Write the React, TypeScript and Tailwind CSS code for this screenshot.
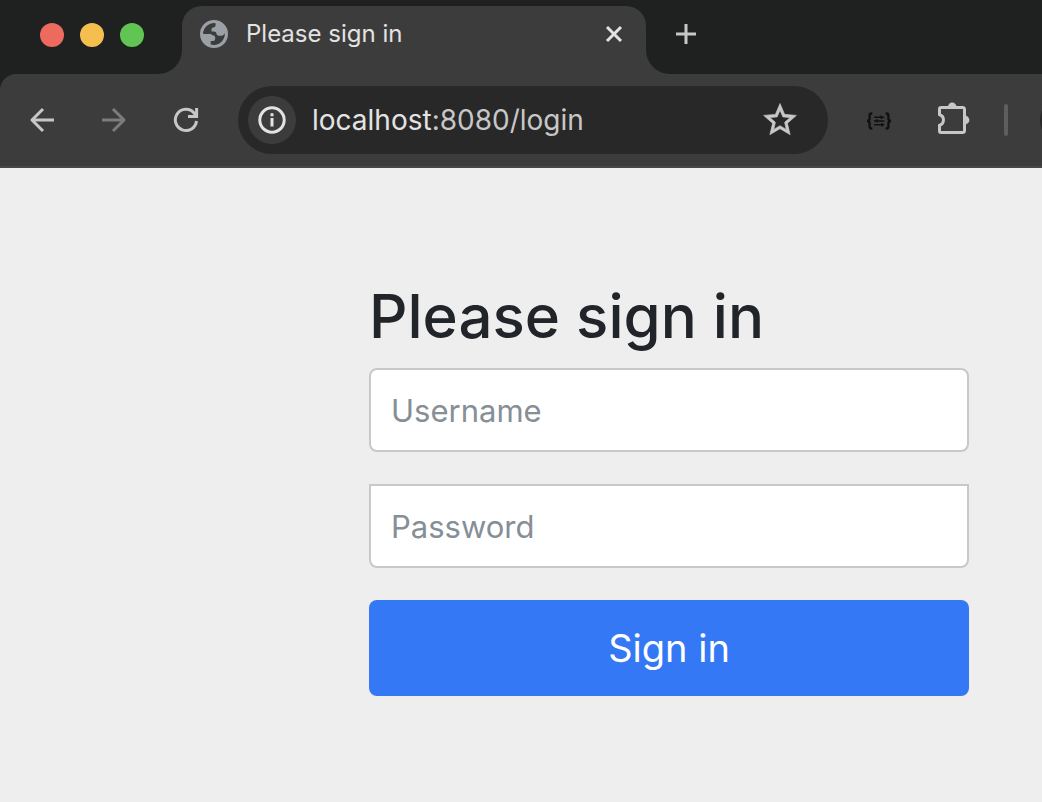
import type { ButtonHTMLAttributes, ReactNode } from "react";

type IconButtonProps = ButtonHTMLAttributes<HTMLButtonElement> & {
  label: string;
  children: ReactNode;
};

function IconButton({ label, children, className = "", ...rest }: IconButtonProps) {
  return (
    <button
      type="button"
      aria-label={label}
      className={`flex shrink-0 items-center justify-center ${className}`}
      {...rest}
    >
      {children}
    </button>
  );
}

function BackIcon() {
  return (
    <svg width="32" height="32" viewBox="0 0 32 32" fill="none" stroke="currentColor" strokeWidth="3" aria-hidden="true">
      <path d="M28 16H6" />
      <path d="M17 5 6 16l11 11" strokeLinejoin="round" />
    </svg>
  );
}

function ForwardIcon() {
  return (
    <svg width="32" height="32" viewBox="0 0 32 32" fill="none" stroke="currentColor" strokeWidth="3" aria-hidden="true">
      <path d="M4 16h22" />
      <path d="m15 5 11 11-11 11" strokeLinejoin="round" />
    </svg>
  );
}

function ReloadIcon() {
  return (
    <svg width="32" height="32" viewBox="0 0 32 32" fill="none" stroke="currentColor" strokeWidth="3" aria-hidden="true">
      <path d="M26.500 17A10.600 10.600 0 1 1 24 9l2 2.400" />
      <path d="M18 12.500h8.600V4" />
    </svg>
  );
}

function GlobeIcon() {
  return (
    <svg width="28" height="28" viewBox="0 0 28 28" fill="currentColor" fillRule="evenodd" aria-hidden="true">
      <path d="M14 0a14 14 0 1 0 0 28a14 14 0 0 0 0-28z M3.100 13.900A10.900 10.900 0 0 1 15.600 3.200V5.300Q15.600 7.300 13.500 7.400Q11.500 7.500 11.500 9.300V11.600H14.200Q16.600 11.700 16.600 14Q16.800 15.700 18.700 15.700H22Q23.500 15.500 24.800 13.200A10.900 10.900 0 0 1 10.700 24.400V21.100H13Q15.200 21 15.200 18.800V17.500Q15 15.400 12.800 15.300Q11.500 15.100 11.300 13.900z" />
    </svg>
  );
}

function InfoIcon() {
  return (
    <svg width="28" height="28" viewBox="0 0 28 28" fill="none" stroke="currentColor" strokeWidth="3" aria-hidden="true">
      <circle cx="14" cy="14" r="12.200" />
      <path d="M14 12v8.500" />
      <path d="M14 7.300v2.900" />
    </svg>
  );
}

function StarIcon() {
  return (
    <svg width="40" height="40" viewBox="0 0 24 24" fill="currentColor" aria-hidden="true">
      <path
        d="m21.800 9.240-7.050-.62L12 2.100 9.250 8.630 2.200 9.240l5.360 4.730L5.920 20.800 12 17.200 18.080 20.800l-1.630-6.830L21.800 9.240zM12 15.400l-3.760 2.270 1-4.280-3.320-2.880 4.380-.38L12 6.100l1.710 4.040 4.380.38-3.320 2.880 1 4.280L12 15.400z"
        stroke="currentColor"
        strokeWidth=".4"
      />
    </svg>
  );
}

function BracesIcon() {
  return (
    <svg width="26" height="20" viewBox="0 0 26 20" fill="none" stroke="currentColor" aria-hidden="true">
      <g strokeWidth="2.300">
        <path d="M6.300 3.500H5.600C4.200 3.500 3.600 4.200 3.600 5.500v3C3.600 10 2.800 11 1 11c1.800 0 2.600 1 2.600 2.500v3c0 1.300.6 2 2 2h.7" />
        <path d="M19.700 3.500h.7c1.400 0 2 .7 2 2v3c0 1.500.8 2.500 2.600 2.500-1.800 0-2.600 1-2.600 2.500v3c0 1.300-.6 2-2 2h-.7" />
      </g>
      <g strokeWidth="1.500">
        <path d="M8 7.300h10.300M8 10.900h10.300M8 14.700h10.300" />
        <path d="M15.300 5.600V9M10.800 9.300v3.300M16 13v3.400" />
      </g>
    </svg>
  );
}

function PuzzleIcon() {
  return (
    <svg width="32" height="36" viewBox="0 0 32 36" fill="none" stroke="currentColor" strokeWidth="3" strokeLinejoin="round" aria-hidden="true">
      <path d="M3 5.500H25A1.500 1.500 0 0 1 26.500 7V29A1.500 1.500 0 0 1 25 30.500H3A1.500 1.500 0 0 1 1.500 29V23.200A5.400 5.400 0 0 0 1.500 12.800V7A1.500 1.500 0 0 1 3 5.500z" />
      <path d="M9.800 5a4.400 4.400 0 0 1 8.800 0zM27 13.600a4.400 4.400 0 0 1 0 8.800z" fill="currentColor" stroke="none" />
    </svg>
  );
}

function TabStrip() {
  return (
    <div className="flex h-[74px] bg-[#3c3c3c]">
      <div className="flex w-[182px] shrink-0 items-start gap-4 rounded-br-3xl bg-[#1f2120] pt-[23px] pl-10">
        <button type="button" aria-label="Close window" className="size-6 rounded-full bg-[#ed6a5e]" />
        <button type="button" aria-label="Minimize window" className="size-6 rounded-full bg-[#f5bf4f]" />
        <button type="button" aria-label="Zoom window" className="size-6 rounded-full bg-[#61c554]" />
      </div>
      <div className="flex w-[464px] bg-[#1f2120] pt-1.5">
        <div className="flex min-w-0 flex-1 items-start rounded-t-[20px] bg-[#3c3c3c] pr-4 pl-[18px] text-[#e3e3e3]">
          <div className="flex h-14 min-w-0 flex-1 items-center gap-[18px]">
            <span className="shrink-0 text-[#9aa0a6]">
              <GlobeIcon />
            </span>
            <span className="flex-1 truncate text-2xl">Please sign in</span>
            <IconButton label="Close tab" className="size-8">
              <svg width="18" height="18" viewBox="0 0 18 18" stroke="currentColor" strokeWidth="3" aria-hidden="true">
                <path d="m2 2 14 14M16 2 2 16" />
              </svg>
            </IconButton>
          </div>
        </div>
      </div>
      <div className="flex flex-1 items-start rounded-bl-3xl bg-[#1f2120] pt-[14px] pl-5">
        <IconButton label="New tab" className="size-10 text-[#c7c7c7]">
          <svg width="20" height="20" viewBox="0 0 20 20" stroke="currentColor" strokeWidth="3" aria-hidden="true">
            <path d="M10 0v20M0 10h20" />
          </svg>
        </IconButton>
      </div>
    </div>
  );
}

function Toolbar() {
  return (
    <div className="bg-[#1f2120]">
      <div className="flex h-[94px] items-center overflow-hidden rounded-tl-2xl border-b-2 border-[#474747] bg-[#3c3c3c] pl-[26px] text-[#c7c7c7]">
        <div className="flex shrink-0 gap-10">
          <IconButton label="Back" className="size-8">
            <BackIcon />
          </IconButton>
          <IconButton label="Forward" className="size-8 text-[#7c7c7c]" disabled>
            <ForwardIcon />
          </IconButton>
          <IconButton label="Reload" className="size-8">
            <ReloadIcon />
          </IconButton>
        </div>
        <div className="ml-9 flex h-[68px] min-w-0 flex-1 items-center rounded-full bg-[#282828] pr-7 pl-2.5">
          <IconButton label="View site information" className="size-12 rounded-full bg-[#3c3c3c] text-[#e3e3e3]">
            <InfoIcon />
          </IconButton>
          <p className="ml-4 flex-1 truncate text-[28px] leading-9 text-[#c7c7c7]">
            <span className="text-[#e3e3e3]">localhost</span>:8080/login
          </p>
          <IconButton label="Bookmark this tab" className="size-10">
            <StarIcon />
          </IconButton>
        </div>
        <div className="ml-[38px] flex shrink-0 items-center">
          <IconButton label="JSON viewer" className="text-[#101010]">
            <BracesIcon />
          </IconButton>
          <IconButton label="Extensions" className="ml-[46px]">
            <PuzzleIcon />
          </IconButton>
          <div className="ml-[34px] h-8 w-1 rounded-full bg-[#5e5e5e]" />
          <div className="ml-8 w-0.5 shrink-0 overflow-hidden">
            <div className="size-12 rounded-full bg-[#282828]" />
          </div>
        </div>
      </div>
    </div>
  );
}

function LoginForm() {
  const field =
    "block h-[84px] w-full border-2 border-[#c8c8c8] bg-white px-5 text-[31px] text-[#212529] outline-none placeholder:text-[#868e96]";
  return (
    <form className="mr-[73px] ml-auto w-full max-w-[600px]" onSubmit={(e) => e.preventDefault()}>
      <h1 className="mb-4 text-[60px] leading-[72px] font-medium text-[#212529]">Please sign in</h1>
      <input type="text" aria-label="Username" placeholder="Username" className={`${field} mb-8 rounded-lg`} />
      <input type="password" aria-label="Password" placeholder="Password" className={`${field} mb-8 rounded-b-lg`} />
      <button type="submit" className="h-24 w-full rounded-lg bg-[#3478f6] text-[38px] text-white">
        Sign in
      </button>
    </form>
  );
}

export default function App() {
  return (
    <div className="flex min-h-screen flex-col bg-[#eeeeee] font-['Inter','Liberation_Sans',sans-serif]">
      <header>
        <TabStrip />
        <Toolbar />
      </header>
      <main className="flex flex-1 pt-28">
        <LoginForm />
      </main>
    </div>
  );
}
